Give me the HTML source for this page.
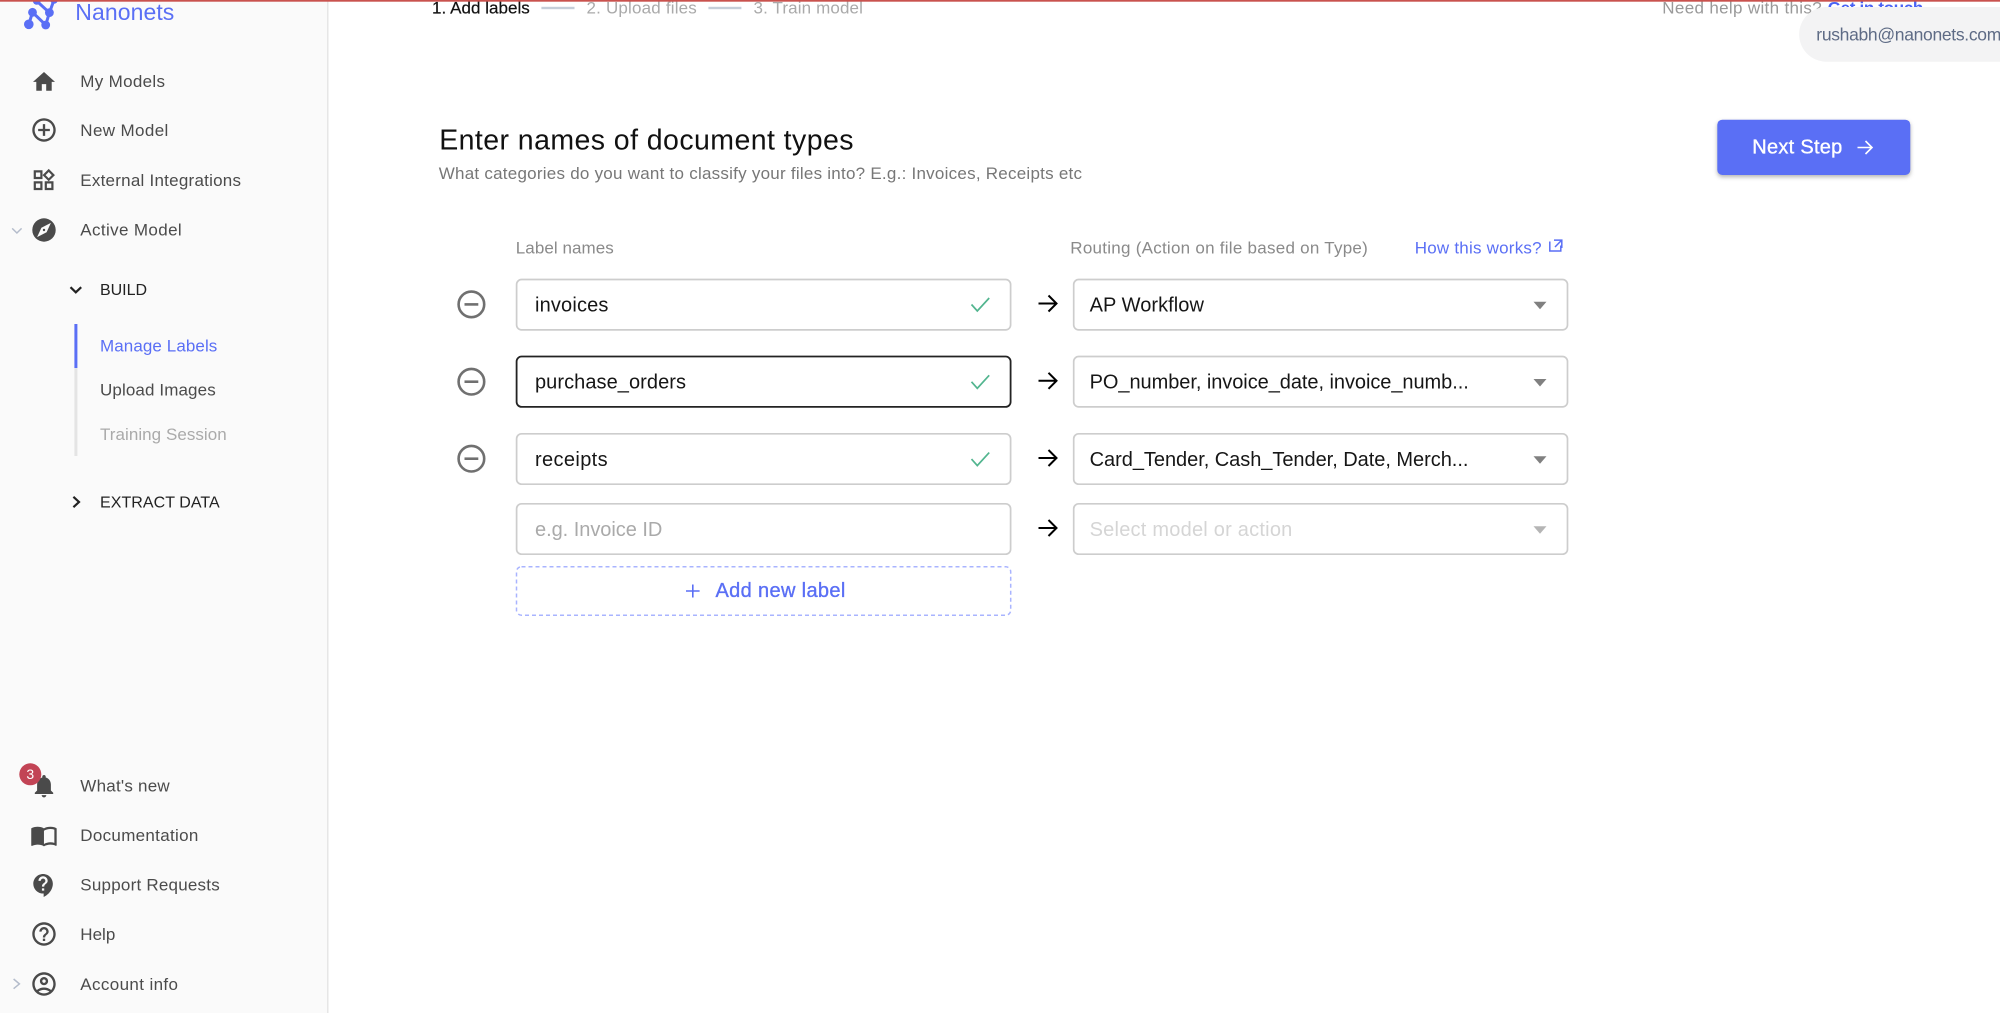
<!DOCTYPE html>
<html lang="en"><head><meta charset="utf-8"><title>Nanonets</title>
<style>
html,body{margin:0;padding:0;background:#fff;width:2000px;height:1013px;overflow:hidden}
svg{display:block;position:absolute;left:0;top:0}
text{font-family:"Liberation Sans",sans-serif;font-size:17px;fill:#4b4b4b}
.i{font-size:20px;fill:#161616}
.l{fill:#8a8a8a}
.b{fill:#5a6ff5}
.f{fill:none;stroke:#cdcdcd;stroke-width:1.7}
#t{filter:blur(.3px)}
</style></head><body>
<svg width="2000" height="1013" viewBox="0 0 2000 1013" xmlns="http://www.w3.org/2000/svg">
<rect width="2000" height="1013" fill="#fff"/>
<!-- sidebar -->
<rect width="327" height="1013" fill="#fafafa"/>
<rect x="327" width="1.5" height="1013" fill="#e6e6e6"/>
<!-- logo -->
<g stroke="#5a6ff5" stroke-width="3" fill="none"><path d="M28.8 24.3L32.5 12.3L45.7 25L49.4 12.7L36.7 1M49.4 12.7L54 0"/></g>
<g fill="#5a6ff5"><circle cx="28.8" cy="24.3" r="4.8"/><circle cx="45.7" cy="25" r="4.4"/><circle cx="32.5" cy="12.3" r="4.4"/><circle cx="49.4" cy="12.6" r="4.4"/><circle cx="36.7" cy="1" r="3.8"/><circle cx="54" cy="0" r="3.8"/></g>
<!-- nav icons -->
<g fill="#4a4a4a">
<path transform="translate(30.8 68.7) scale(1.1)" d="M10 20v-6h4v6h5v-8h3L12 3 2 12h3v8z"/>
<path transform="translate(29.96 115.96) scale(1.17)" d="M13 7h-2v4H7v2h4v4h2v-4h4v-2h-4V7zm-1-5C6.48 2 2 6.48 2 12s4.48 10 10 10 10-4.48 10-10S17.52 2 12 2zm0 18c-4.41 0-8-3.59-8-8s3.59-8 8-8 8 3.59 8 8-3.59 8-8 8z"/>
<path transform="translate(30.4 167) scale(1.1)" d="M16.66 4.52l2.83 2.83-2.83 2.83-2.83-2.83 2.83-2.83M9 5v4H5V5h4m10 10v4h-4v-4h4M9 15v4H5v-4h4m7.66-13.31L11 7.34 16.66 13l5.66-5.66-5.66-5.65zM11 3H3v8h8V3zm10 10h-8v8h8v-8zm-10 0H3v8h8v-8z"/>
<circle cx="44" cy="230" r="11.7"/>
<path d="M50.9 222.9L46.6 232.3L37.1 237.1L41.4 227.7Z" fill="#fafafa"/>
<circle cx="44" cy="230" r="1.2"/>
<path transform="translate(30.2 772.1) scale(1.15)" d="M12 22c1.1 0 2-.9 2-2h-4c0 1.1.89 2 2 2zm6-6v-5c0-3.07-1.64-5.64-4.5-6.32V4c0-.83-.67-1.5-1.5-1.5s-1.5.67-1.5 1.5v.68C7.63 5.36 6 7.92 6 11v5l-2 2v1h16v-1l-2-2z"/>
<path transform="translate(30.1 821.5) scale(1.155)" d="M21 5c-1.11-.35-2.33-.5-3.5-.5-1.95 0-4.05.4-5.5 1.5-1.45-1.1-3.55-1.5-5.5-1.5S2.45 4.9 1 6v14.65c0 .25.25.5.5.5.1 0 .15-.05.25-.05C3.1 20.45 5.05 20 6.5 20c1.95 0 4.05.4 5.5 1.5 1.35-.85 3.8-1.5 5.5-1.5 1.65 0 3.35.3 4.75 1.05.1.05.15.05.25.05.25 0 .5-.25.5-.5V6c-.6-.45-1.25-.75-2-1zm0 13.5c-1.1-.35-2.3-.5-3.5-.5-1.7 0-4.15.65-5.5 1.5V8c1.35-.85 3.8-1.5 5.5-1.5 1.2 0 2.4.15 3.5.5v11.5z"/>
<path transform="translate(29.85 871.7) scale(1.15)" d="M11.5 2C6.81 2 3 5.81 3 10.5S6.81 19 11.5 19h.5v3c4.86-2.34 8-7 8-11.5C20 5.81 16.19 2 11.5 2zm1 14.5h-2v-2h2v2zm0-3.5h-2c0-3.25 3-3 3-5 0-1.1-.9-2-2-2s-2 .9-2 2h-2c0-2.21 1.79-4 4-4s4 1.79 4 4c0 2.5-3 2.75-3 5z"/>
<path transform="translate(29.96 919.96) scale(1.17)" d="M11 18h2v-2h-2v2zm1-16C6.48 2 2 6.48 2 12s4.48 10 10 10 10-4.48 10-10S17.52 2 12 2zm0 18c-4.41 0-8-3.59-8-8s3.59-8 8-8 8 3.59 8 8-3.59 8-8 8zm0-14c-2.21 0-4 1.79-4 4h2c0-1.1.9-2 2-2s2 .9 2 2c0 2-3 1.75-3 5h2c0-2.25 3-2.5 3-5 0-2.21-1.79-4-4-4z"/>
<path transform="translate(29.96 969.96) scale(1.17)" d="M12 2C6.48 2 2 6.48 2 12s4.48 10 10 10 10-4.48 10-10S17.52 2 12 2zM7.35 18.5C8.66 17.56 10.26 17 12 17s3.34.56 4.65 1.5c-1.31.94-2.91 1.5-4.65 1.5s-3.34-.56-4.65-1.5zm10.79-1.38C16.45 15.8 14.32 15 12 15s-4.45.8-6.14 2.12C4.7 15.73 4 13.95 4 12c0-4.42 3.58-8 8-8s8 3.58 8 8c0 1.95-.7 3.73-1.86 5.12zM12 6c-1.93 0-3.5 1.57-3.5 3.5S10.07 13 12 13s3.5-1.57 3.5-3.5S13.93 6 12 6zm0 5c-.83 0-1.5-.67-1.5-1.5S11.17 8 12 8s1.5.67 1.5 1.5S12.83 11 12 11z"/>
</g>
<circle cx="30.3" cy="774.3" r="11" fill="#c24455"/>
<!-- chevrons -->
<g fill="none" stroke-width="1.5" stroke="#b4bccb"><path d="M12.2 228.4L16.9 233L21.6 228.4"/><path d="M13.6 979L19.4 983.9L13.6 988.7"/></g>
<g fill="none" stroke-width="2.2" stroke="#222"><path d="M70.5 287.2L75.8 292.3L81.2 287.2"/><path d="M73.4 496.8L79 502L73.4 507.2"/></g>
<!-- sub nav bar -->
<rect x="74.4" y="368" width="3" height="88" fill="#e4e4e4"/>
<rect x="74.4" y="324" width="3" height="44" fill="#5a6ff5"/>
<g id="t">
<text x="75.3" y="20" style="font-size:23px" class="b" textLength="99">Nanonets</text>
<text x="80.3" y="87" textLength="84.7">My Models</text>
<text x="80.3" y="136" textLength="88">New Model</text>
<text x="80.3" y="186" textLength="160.7">External Integrations</text>
<text x="80.3" y="235.7" textLength="101.4">Active Model</text>
<text x="100" y="295" style="fill:#222;font-size:16px" textLength="47">BUILD</text>
<text x="100" y="351.7" class="b" textLength="117.3">Manage Labels</text>
<text x="100" y="395.7" textLength="115.7">Upload Images</text>
<text x="100" y="440" style="fill:#aaa" textLength="126.7">Training Session</text>
<text x="100" y="507.3" style="fill:#222;font-size:16px" textLength="119.7">EXTRACT DATA</text>
<text x="80.3" y="791.3" textLength="89.4">What's new</text>
<text x="80.3" y="841" textLength="118">Documentation</text>
<text x="80.3" y="890.3" textLength="139.4">Support Requests</text>
<text x="80.3" y="940" textLength="35">Help</text>
<text x="80.3" y="990" textLength="97.7">Account info</text>
<text x="30.3" y="779.2" text-anchor="middle" style="fill:#fff;font-size:14px">3</text>
<!-- top steps -->
<text x="432" y="13.7" style="fill:#111;stroke:#111;stroke-width:.2" textLength="97.8">1. Add labels</text>
<text x="586.5" y="13.7" style="fill:#aaa" textLength="110.3">2. Upload files</text>
<text x="753.5" y="13.7" style="fill:#aaa" textLength="109.4">3. Train model</text>
<text x="1662.3" y="13.7" style="fill:#999" textLength="159.4">Need help with this?</text>
<text x="1827.7" y="13.7" class="b" style="font-weight:bold;fill:#4a63f5" textLength="95.6">Get in touch</text>
<!-- headings -->
<text x="439.2" y="149.7" style="font-size:28.5px;fill:#111" textLength="414.3">Enter names of document types</text>
<text x="438.7" y="179" style="fill:#777" textLength="643.3">What categories do you want to classify your files into? E.g.: Invoices, Receipts etc</text>
<text x="515.8" y="253.7" class="l" textLength="97.9">Label names</text>
<text x="1070.3" y="253.7" class="l" textLength="297.5">Routing (Action on file based on Type)</text>
<text x="1414.7" y="253.7" class="b" textLength="126.9">How this works?</text>
</g>
<rect y="0" width="2000" height="1.7" fill="#c9524e"/>
<!-- lines -->
<rect x="541.4" y="6.8" width="33.1" height="2.4" fill="#c5ced9"/>
<rect x="708.4" y="6.8" width="33" height="2.4" fill="#c5ced9"/>
<!-- pill -->
<path d="M2000 7H1826.5A27.3 27.3 0 0 0 1826.5 61.7H2000Z" fill="#f3f3f4"/>
<text x="1816.3" y="40.7" style="fill:#5e6b85;font-size:17.5px" textLength="185">rushabh@nanonets.com</text>
<!-- button -->
<rect x="1717.3" y="119.7" width="193" height="55.3" rx="5" fill="#5a6ff5" style="filter:drop-shadow(0 2px 2px rgba(0,0,0,.3))"/>
<text x="1752.3" y="153.6" style="fill:#fff;font-size:20px;stroke:#fff;stroke-width:.35" textLength="90">Next Step</text>
<path d="M1857.5 147.5H1871.5M1865.5 141L1872 147.5L1865.5 154" fill="none" stroke="#fff" stroke-width="1.6"/>
<path d="M1549.8 241.5V251H1560.8V245.5M1554 240.1H1561.8V248M1561.5 240.4L1555 247" fill="none" stroke="#5a6ff5" stroke-width="1.5"/>
<!-- minus circles -->
<g fill="none" stroke="#707070" stroke-width="2.6">
<circle cx="471.4" cy="304.4" r="12.8"/><path d="M464.5 304.4H478.3"/>
<circle cx="471.4" cy="381.7" r="12.8"/><path d="M464.5 381.7H478.3"/>
<circle cx="471.4" cy="458.7" r="12.8"/><path d="M464.5 458.7H478.3"/>
</g>
<!-- inputs -->
<rect class="f" x="516.6" y="279.5" width="494" height="50.4" rx="5"/>
<rect x="516.6" y="356.5" width="494" height="50.4" rx="5" fill="none" stroke="#232323" stroke-width="1.8"/>
<rect class="f" x="516.6" y="433.8" width="494" height="50.4" rx="5"/>
<rect class="f" x="516.6" y="503.8" width="494" height="50.4" rx="5"/>
<rect x="516.5" y="566.7" width="494.2" height="48.5" rx="5" fill="none" stroke="#a9b4ff" stroke-width="1.5" stroke-dasharray="4 3"/>
<text class="i" x="535" y="311.3" textLength="73.4">invoices</text>
<text class="i" x="535" y="388.7" textLength="151">purchase_orders</text>
<text class="i" x="535" y="466" textLength="72.6">receipts</text>
<text class="i" x="535" y="536" style="fill:#aaa" textLength="127.3">e.g. Invoice ID</text>
<g fill="none" stroke="#52b58f" stroke-width="1.7">
<path d="M971.5 304.5L977.3 311L989.2 298"/>
<path d="M971.5 381.8L977.3 388.3L989.2 375.3"/>
<path d="M971.5 459.1L977.3 465.6L989.2 452.6"/>
</g>
<!-- arrows -->
<g fill="none" stroke="#000" stroke-width="2">
<path d="M1038.5 303.5H1056M1048.5 295.5L1056.5 303.5L1048.5 311.5"/>
<path d="M1038.5 380.8H1056M1048.5 372.8L1056.5 380.8L1048.5 388.8"/>
<path d="M1038.5 458H1056M1048.5 450L1056.5 458L1048.5 466"/>
<path d="M1038.5 528H1056M1048.5 520L1056.5 528L1048.5 536"/>
</g>
<!-- selects -->
<rect class="f" x="1073.7" y="279.5" width="493.8" height="50.4" rx="5"/>
<rect class="f" x="1073.7" y="356.5" width="493.8" height="50.4" rx="5"/>
<rect class="f" x="1073.7" y="433.8" width="493.8" height="50.4" rx="5"/>
<rect class="f" x="1073.7" y="503.8" width="493.8" height="50.4" rx="5"/>
<text class="i" x="1089.6" y="311.3" textLength="114.3">AP Workflow</text>
<text class="i" x="1089.6" y="388.7" textLength="379.2">PO_number, invoice_date, invoice_numb...</text>
<text class="i" x="1089.6" y="466" textLength="378.8">Card_Tender, Cash_Tender, Date, Merch...</text>
<text class="i" x="1089.6" y="536" style="fill:#d5d5d5" textLength="202.7">Select model or action</text>
<g fill="#808080">
<path d="M1533.5 301.7H1546.5L1540 309.2Z"/>
<path d="M1533.5 379H1546.5L1540 386.5Z"/>
<path d="M1533.5 456.3H1546.5L1540 463.8Z"/>
<path d="M1533.5 526.2H1546.5L1540 533.7Z" fill="#b5b5b5"/>
</g>
<!-- add label -->
<path d="M692.8 584.5V597.5M686 591H699.6" stroke="#5a6ff5" stroke-width="1.6" fill="none"/>
<text x="715.5" y="597" class="b" style="font-size:20px;stroke:#5a6ff5;stroke-width:.35" textLength="129.8">Add new label</text>
</svg>
</body></html>
